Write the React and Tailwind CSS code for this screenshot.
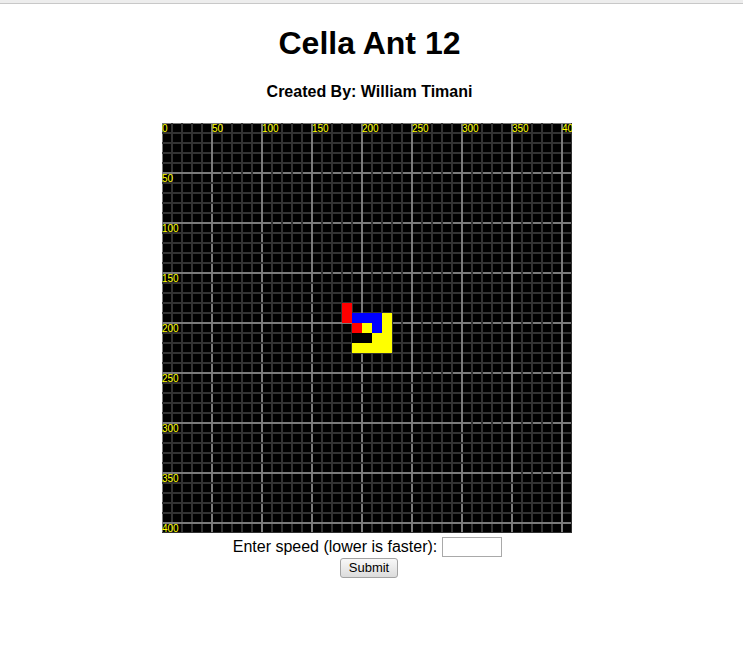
import React from 'react';

const SIZE = 410;
const CELL = 10;

// cells that the ant has painted, in canvas coords
const cells = [
  { x: 180, y: 180, c: '#ff0000' },
  { x: 180, y: 190, c: '#ff0000' },
  { x: 190, y: 200, c: '#ff0000' },
  { x: 190, y: 190, c: '#0000ff' },
  { x: 200, y: 190, c: '#0000ff' },
  { x: 210, y: 190, c: '#0000ff' },
  { x: 210, y: 200, c: '#0000ff' },
  { x: 220, y: 190, c: '#ffff00' },
  { x: 220, y: 200, c: '#ffff00' },
  { x: 220, y: 210, c: '#ffff00' },
  { x: 220, y: 220, c: '#ffff00' },
  { x: 200, y: 200, c: '#ffff00' },
  { x: 210, y: 210, c: '#ffff00' },
  { x: 190, y: 220, c: '#ffff00' },
  { x: 200, y: 220, c: '#ffff00' },
  { x: 210, y: 220, c: '#ffff00' },
  { x: 190, y: 210, c: '#000000' },
  { x: 200, y: 210, c: '#000000' },
];

const lines = Array.from({ length: SIZE / CELL + 1 }, (_, i) => i * CELL);
const labels = [0, 50, 100, 150, 200, 250, 300, 350, 400];

const Board = () => (
  <svg width={SIZE} height={SIZE} viewBox={`0 0 ${SIZE} ${SIZE}`} className="block">
    <rect x="0" y="0" width={SIZE} height={SIZE} fill="#000" />
    {lines.map((p) => (
      <g key={p} shapeRendering="crispEdges">
        <rect x={p - 1} y="0" width="2" height={SIZE} fill={p % 50 === 0 ? '#7a7a7a' : '#323232'} />
        <rect x="0" y={p - 1} width={SIZE} height="2" fill={p % 50 === 0 ? '#7a7a7a' : '#323232'} />
      </g>
    ))}
    {cells.map((cell, i) => (
      <rect key={i} x={cell.x} y={cell.y} width={CELL} height={CELL} fill={cell.c} shapeRendering="crispEdges" />
    ))}
    {labels.map((n) => (
      <text key={'t' + n} x={n} y={9} fill="#ffff00" fontSize="10" fontFamily="'Liberation Sans', Arial, sans-serif">
        {n}
      </text>
    ))}
    {labels.slice(1).map((n) => (
      <text key={'l' + n} x={0} y={n + 9} fill="#ffff00" fontSize="10" fontFamily="'Liberation Sans', Arial, sans-serif">
        {n}
      </text>
    ))}
  </svg>
);

export default function App() {
  return (
    <div className="min-h-[650px] bg-white text-black font-['Liberation_Sans',Arial,sans-serif]">
      {/* top strip */}
      <div className="h-[4px] bg-[#ededed] border-b border-[#c8c8c8]"></div>

      <div className="w-[739px] flex flex-col items-center">
        <h1 className="mt-[21px] text-[32px] leading-[37px] font-bold">Cella Ant 12</h1>
        <h2 className="mt-[21px] text-[16px] leading-[18px] font-bold">Created By: William Timani</h2>

        <div className="mt-[22px] pr-[5px]">
          <Board />
        </div>

        <div className="mt-[4px] h-[20px] pr-[4px] flex items-center gap-[5px]">
          <span className="text-[16px] leading-[18px]">Enter speed (lower is faster):</span>
          <input type="text" className="w-[60px] h-[20px] border border-[#a9a9a9] bg-white px-1 text-[13px] outline-none" />
        </div>

        <button className="mt-[1px] mr-[1px] w-[58px] h-[20px] border border-[#a3a3a3] rounded-[3px] bg-linear-to-b from-[#f8f8f8] to-[#dcdcdc] text-[13px] leading-[18px] text-black">
          Submit
        </button>
      </div>
    </div>
  );
}
